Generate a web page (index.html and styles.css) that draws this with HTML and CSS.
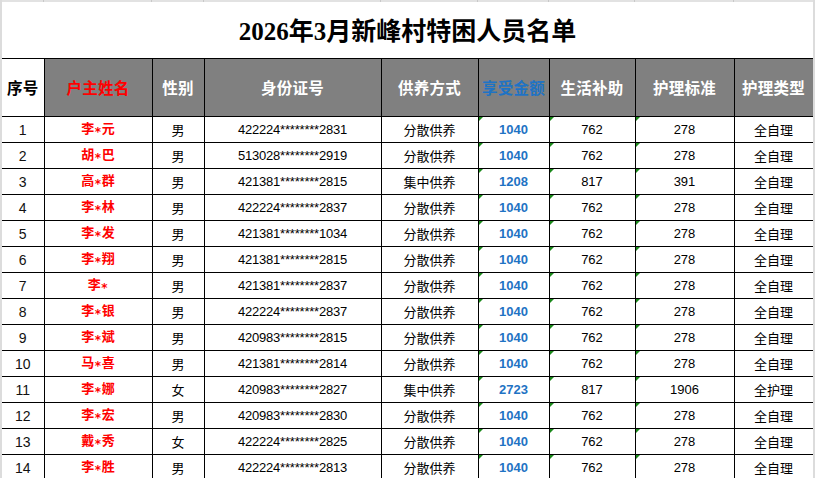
FILE: index.html
```html
<!DOCTYPE html>
<html lang="zh-CN">
<head>
<meta charset="utf-8">
<title>2026年3月新峰村特困人员名单</title>
<link rel="stylesheet" href="styles.css">
</head>
<body>
<div class="sheet">
  <div class="gridstrip">
    <span class="g1"></span><span class="g2"></span><span class="g3"></span><span class="g4"></span><span class="g5"></span><span class="g6"></span><span class="g7"></span><span class="g8"></span><span class="g9"></span>
  </div>
  <table class="roster">
    <colgroup>
      <col class="c1"><col class="c2"><col class="c3"><col class="c4"><col class="c5"><col class="c6"><col class="c7"><col class="c8"><col class="c9">
    </colgroup>
    <thead>
      <tr class="title-row"><th colspan="9" class="title">2026年3月新峰村特困人员名单</th></tr>
      <tr class="head-row">
        <th class="h-white">序号</th>
        <th class="h-red">户主姓名</th>
        <th>性别</th>
        <th>身份证号</th>
        <th>供养方式</th>
        <th class="h-blue">享受金额</th>
        <th>生活补助</th>
        <th>护理标准</th>
        <th class="last">护理类型</th>
      </tr>
    </thead>
    <tbody>
      <tr><td class="no">1</td><td class="name">李<span class="mask">*</span>元</td><td>男</td><td class="id">422224********2831</td><td>分散供养</td><td class="amt flag">1040</td><td class="num flag">762</td><td class="num flag">278</td><td class="last">全自理</td></tr>
      <tr><td class="no">2</td><td class="name">胡<span class="mask">*</span>巴</td><td>男</td><td class="id">513028********2919</td><td>分散供养</td><td class="amt flag">1040</td><td class="num flag">762</td><td class="num flag">278</td><td class="last">全自理</td></tr>
      <tr><td class="no">3</td><td class="name">高<span class="mask">*</span>群</td><td>男</td><td class="id">421381********2815</td><td>集中供养</td><td class="amt flag">1208</td><td class="num flag">817</td><td class="num flag">391</td><td class="last">全自理</td></tr>
      <tr><td class="no">4</td><td class="name">李<span class="mask">*</span>林</td><td>男</td><td class="id">422224********2837</td><td>分散供养</td><td class="amt flag">1040</td><td class="num flag">762</td><td class="num flag">278</td><td class="last">全自理</td></tr>
      <tr><td class="no">5</td><td class="name">李<span class="mask">*</span>发</td><td>男</td><td class="id">421381********1034</td><td>分散供养</td><td class="amt flag">1040</td><td class="num flag">762</td><td class="num flag">278</td><td class="last">全自理</td></tr>
      <tr><td class="no">6</td><td class="name">李<span class="mask">*</span>翔</td><td>男</td><td class="id">421381********2815</td><td>分散供养</td><td class="amt flag">1040</td><td class="num flag">762</td><td class="num flag">278</td><td class="last">全自理</td></tr>
      <tr><td class="no">7</td><td class="name">李<span class="mask">*</span></td><td>男</td><td class="id">421381********2837</td><td>分散供养</td><td class="amt flag">1040</td><td class="num flag">762</td><td class="num flag">278</td><td class="last">全自理</td></tr>
      <tr><td class="no">8</td><td class="name">李<span class="mask">*</span>银</td><td>男</td><td class="id">422224********2837</td><td>分散供养</td><td class="amt flag">1040</td><td class="num flag">762</td><td class="num flag">278</td><td class="last">全自理</td></tr>
      <tr><td class="no">9</td><td class="name">李<span class="mask">*</span>斌</td><td>男</td><td class="id">420983********2815</td><td>分散供养</td><td class="amt flag">1040</td><td class="num flag">762</td><td class="num flag">278</td><td class="last">全自理</td></tr>
      <tr><td class="no">10</td><td class="name">马<span class="mask">*</span>喜</td><td>男</td><td class="id">421381********2814</td><td>分散供养</td><td class="amt flag">1040</td><td class="num flag">762</td><td class="num flag">278</td><td class="last">全自理</td></tr>
      <tr><td class="no">11</td><td class="name">李<span class="mask">*</span>娜</td><td>女</td><td class="id">420983********2827</td><td>集中供养</td><td class="amt flag">2723</td><td class="num flag">817</td><td class="num flag">1906</td><td class="last">全护理</td></tr>
      <tr><td class="no">12</td><td class="name">李<span class="mask">*</span>宏</td><td>男</td><td class="id">420983********2830</td><td>分散供养</td><td class="amt flag">1040</td><td class="num flag">762</td><td class="num flag">278</td><td class="last">全自理</td></tr>
      <tr><td class="no">13</td><td class="name">戴<span class="mask">*</span>秀</td><td>女</td><td class="id">422224********2825</td><td>分散供养</td><td class="amt flag">1040</td><td class="num flag">762</td><td class="num flag">278</td><td class="last">全自理</td></tr>
      <tr><td class="no">14</td><td class="name">李<span class="mask">*</span>胜</td><td>男</td><td class="id">422224********2813</td><td>分散供养</td><td class="amt flag">1040</td><td class="num flag">762</td><td class="num flag">278</td><td class="last">全自理</td></tr>
    </tbody>
  </table>
</div>
</body>
</html>
```

FILE: styles.css
```css
html, body {
  margin: 0;
  padding: 0;
  background: #ffffff;
}

body {
  font-family: "Liberation Sans", "Noto Sans CJK SC", sans-serif;
  color: #000;
  overflow: hidden;
}

.sheet {
  width: 811px;
  border-left: 2px solid #dcdcdc;
  border-right: 2px solid #dcdcdc;
  height: 478px;
  overflow: hidden;
}

.gridstrip {
  display: flex;
  height: 2px;
  background: #e2e2e2;
}

.gridstrip span {
  height: 2px;
  box-sizing: border-box;
  border-right: 1px solid #c8c8c8;
}

.g1 { width: 42px; }
.g2 { width: 108px; }
.g3 { width: 52px; }
.g4 { width: 177px; }
.g5 { width: 97px; }
.g6 { width: 71px; }
.g7 { width: 86px; }
.g8 { width: 99px; }
.g9 { width: 79px; border-right: none !important; }

.roster {
  width: 811px;
  table-layout: fixed;
  border-collapse: collapse;
  border-spacing: 0;
}

.c1 { width: 42px; }
.c2 { width: 108px; }
.c3 { width: 52px; }
.c4 { width: 177px; }
.c5 { width: 97px; }
.c6 { width: 71px; }
.c7 { width: 86px; }
.c8 { width: 99px; }
.c9 { width: 79px; }

.roster th,
.roster td {
  padding: 0;
  text-align: center;
  vertical-align: middle;
  white-space: nowrap;
  overflow: hidden;
}

.title-row th {
  height: 54px;
  border: none;
  border-bottom: 1px solid #000;
  font-family: "Liberation Serif", "Noto Sans CJK SC", serif;
  font-size: 25px;
  font-weight: 700;
  line-height: 25px;
  padding-top: 2px;
  color: #000;
  background: #fff;
}

.head-row th {
  height: 56px;
  padding-bottom: 1px;
  background: #808080;
  color: #fff;
  font-family: "Noto Sans CJK SC", sans-serif;
  font-size: 15.5px;
  font-weight: 700;
  letter-spacing: 0.3px;
  border-left: 1px solid #000;
  border-bottom: 1px solid #000;
}

.head-row th.h-white {
  background: #fff;
  color: #000;
  border-left: none;
}

.head-row th.h-red { color: #ff0000; }
.head-row th.h-blue { color: #1f73c4; }

.roster .last { border-right: 1px solid #000; }

.roster tbody td {
  height: 25px;
  border-left: 1px solid #000;
  border-bottom: 1px solid #000;
  font-family: "Noto Sans CJK SC", sans-serif;
  font-size: 13px;
  line-height: 16px;
  position: relative;
}

.roster tbody td.no {
  border-left: none;
  font-family: "Liberation Sans", sans-serif;
  font-size: 14px;
  color: #111;
}

.roster tbody td.name {
  color: #ff0000;
  font-weight: 700;
  font-size: 13px;
}

.mask {
  font-family: "DejaVu Sans", sans-serif;
  font-weight: 700;
  font-size: 12px;
  vertical-align: -3px;
  margin: 0 0.5px;
}

.roster tbody td.id {
  font-family: "Liberation Sans", sans-serif;
  font-size: 13px;
  letter-spacing: -0.2px;
}

.roster tbody td.amt {
  font-family: "Liberation Sans", sans-serif;
  font-weight: 700;
  font-size: 13px;
  color: #1f73c4;
}

.roster tbody td.num {
  font-family: "Liberation Sans", sans-serif;
  font-size: 13px;
}

.roster tbody td.flag::before {
  content: "";
  position: absolute;
  left: 0;
  top: 0;
  width: 0;
  height: 0;
  border-top: 4px solid #1a8a1a;
  border-right: 4px solid transparent;
}
```
